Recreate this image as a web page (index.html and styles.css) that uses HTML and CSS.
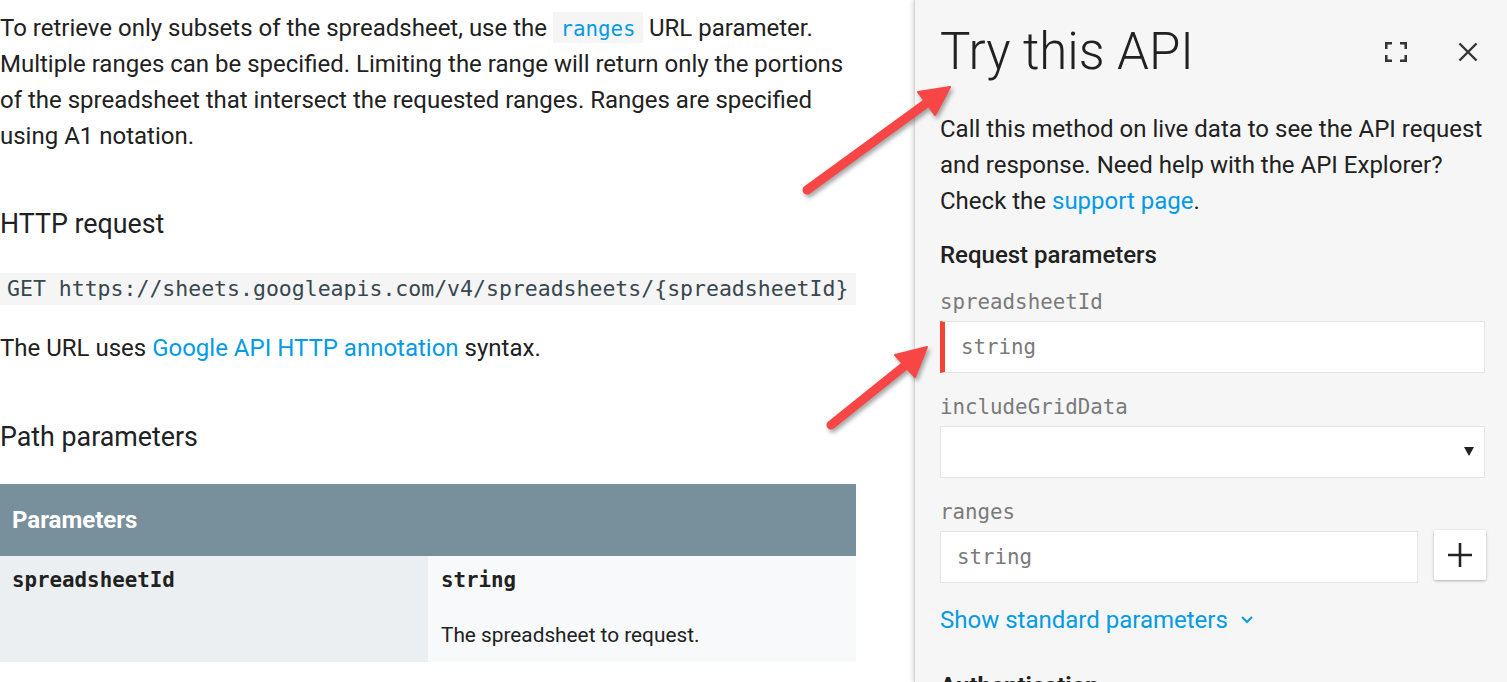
FILE: index.html
```html
<!DOCTYPE html>
<html lang="en">
<head>
<meta charset="utf-8">
<title>spreadsheets.get</title>
<link rel="stylesheet" href="styles.css">
</head>
<body>
<div class="page">
  <main class="doc">
    <p class="intro">To retrieve only subsets of the spreadsheet, use the <code class="inline">ranges</code> URL parameter. Multiple ranges can be specified. Limiting the range will return only the portions of the spreadsheet that intersect the requested ranges. Ranges are specified using A1 notation.</p>
    <h2 class="doc-h h-http">HTTP request</h2>
    <pre class="req">GET https://sheets.googleapis.com/v4/spreadsheets/{spreadsheetId}</pre>
    <p class="url-note">The URL uses <a class="link" href="#">Google API HTTP annotation</a> syntax.</p>
    <h2 class="doc-h h-path">Path parameters</h2>
    <table class="params">
      <thead>
        <tr><th colspan="2">Parameters</th></tr>
      </thead>
      <tbody>
        <tr>
          <td class="p-name">spreadsheetId</td>
          <td class="p-desc">
            <div class="p-type">string</div>
            <p class="p-text">The spreadsheet to request.</p>
          </td>
        </tr>
      </tbody>
    </table>
  </main>

  <aside class="panel">
    <div class="panel-head">
      <h1 class="panel-title">Try this API</h1>
      <div class="head-icons">
        <svg class="ic-full" width="22" height="20" viewBox="0 0 22 20"><path d="M0 0h7v2.5H2.5V7H0zM22 0h-7v2.5h4.5V7H22zM0 20h7v-2.5H2.5V13H0zM22 20h-7v-2.5h4.5V13H22z" fill="#333"/></svg>
        <svg class="ic-close" width="20" height="20" viewBox="0 0 20 20"><path d="M1.5 1.5L18.5 18.5M18.5 1.5L1.5 18.5" stroke="#333" stroke-width="2.4" fill="none"/></svg>
      </div>
    </div>
    <p class="panel-desc">Call this method on live data to see the API request and response. Need help with the API Explorer? Check the <a class="link" href="#">support page</a>.</p>
    <div class="rp-title">Request parameters</div>

    <div class="field field-first">
      <div class="field-label">spreadsheetId</div>
      <div class="input required"><span class="ph">string</span></div>
    </div>
    <div class="field">
      <div class="field-label">includeGridData</div>
      <div class="input select"><svg class="sel-arrow" width="10" height="9" viewBox="0 0 10 9"><path d="M0 0h10L5 9z" fill="#222"/></svg></div>
    </div>
    <div class="field">
      <div class="field-label">ranges</div>
      <div class="field-row">
        <div class="input grow"><span class="ph">string</span></div>
        <button class="add-btn" type="button"><svg width="24" height="24" viewBox="0 0 24 24"><path d="M12 0v24M0 12h24" stroke="#222" stroke-width="2.6" fill="none"/></svg></button>
      </div>
    </div>

    <div class="std-params"><span>Show standard parameters</span><svg class="chev" width="12" height="8" viewBox="0 0 12 8"><path d="M1 1l5 5 5-5" stroke="#039be5" stroke-width="2" fill="none"/></svg></div>
    <div class="auth">Authentication</div>
  </aside>
</div>

<svg class="arrows" width="1507" height="682" viewBox="0 0 1507 682">
  <g fill="#f84545" stroke="#f84545">
    <line x1="807" y1="190" x2="928" y2="102" stroke-width="9" stroke-linecap="round"/>
    <polygon points="950,87 918,92 935,115" stroke-width="2" stroke-linejoin="round"/>
    <line x1="831" y1="425" x2="907" y2="364" stroke-width="9" stroke-linecap="round"/>
    <polygon points="927,347 895,355 915,377" stroke-width="2" stroke-linejoin="round"/>
  </g>
</svg>
</body>
</html>
```

FILE: styles.css
```css
* { box-sizing: border-box; }

html, body {
  margin: 0;
  padding: 0;
}

body {
  position: relative;
  width: 1507px;
  height: 682px;
  overflow: hidden;
  background: #fff;
  color: #212121;
  font-family: Roboto, "Noto Sans", sans-serif;
}

.page {
  display: flex;
  height: 682px;
}

/* ---------- left documentation column ---------- */
.doc {
  flex: none;
  width: 914px;
}

.intro {
  margin: 10px 0 0;
  width: 856px;
  font-size: 24px;
  line-height: 36px;
}

.inline {
  font-family: "DejaVu Sans Mono", monospace;
  font-size: 20.8px;
  line-height: 1;
  color: #039be5;
  background: #f5f5f5;
  padding: 5px 7.5px 2px;
}

.doc-h {
  margin: 0;
  font-weight: 400;
  font-size: 26.8px;
  line-height: 36px;
  color: #202124;
}

.h-http { margin-top: 52px; }
.h-path { margin-top: 53px; }

.req {
  margin: 31px 0 0;
  width: 856px;
  height: 32px;
  padding: 0 7px;
  background: #f5f5f5;
  color: #37474f;
  font-family: "DejaVu Sans Mono", monospace;
  font-size: 21.5px;
  line-height: 32px;
  white-space: pre;
  overflow: hidden;
}

.url-note {
  margin: 25px 0 0;
  font-size: 24px;
  line-height: 36px;
}

.link {
  color: #039be5;
  text-decoration: none;
}

.params {
  margin-top: 29px;
  width: 856px;
  border-collapse: collapse;
  table-layout: fixed;
}

.params th {
  height: 72px;
  padding: 0 12px;
  background: #78909c;
  color: #fff;
  text-align: left;
  font-weight: 700;
  font-size: 24px;
  line-height: 36px;
}

.params td {
  vertical-align: top;
  width: 428px;
}

.p-name {
  background: #eceff1;
  padding: 10px 12px 11px;
  font-family: "DejaVu Sans Mono", monospace;
  font-weight: 700;
  font-size: 20.8px;
  line-height: 28px;
}

.p-desc {
  background: #f7f9fa;
  padding: 10px 13px 11px;
}

.p-type {
  font-family: "DejaVu Sans Mono", monospace;
  font-weight: 700;
  font-size: 20.8px;
  line-height: 28px;
}

.p-text {
  margin: 26px 0 0;
  font-size: 20.8px;
  line-height: 31px;
}

/* ---------- right "Try this API" panel ---------- */
.panel {
  flex: none;
  width: 593px;
  height: 682px;
  background: #f6f6f6;
  border-left: 1px solid #d4d4d4;
  box-shadow: -2px 0 4px rgba(0, 0, 0, 0.12);
  padding: 22px 22px 0 25px;
  overflow: hidden;
}

.panel-head {
  display: flex;
  align-items: center;
  height: 60px;
}

.panel-title {
  flex: 1;
  margin: 0;
  font-size: 51px;
  font-weight: 300;
  line-height: 60px;
  color: #212121;
}

.head-icons {
  display: flex;
  align-items: center;
  gap: 51px;
  margin-right: 7px;
}

.ic-full, .ic-close { display: block; }

.panel-desc {
  margin: 29px -10px 0 0;
  font-size: 24px;
  line-height: 36px;
  color: #212121;
}

.rp-title {
  margin-top: 18px;
  font-size: 24px;
  line-height: 36px;
  font-weight: 500;
}

.field {
  margin-top: 20.5px;
}

.field.field-first {
  margin-top: 15px;
}

.field-label {
  font-family: "DejaVu Sans Mono", monospace;
  font-size: 20.8px;
  line-height: 28px;
  color: #7a7a7a;
  margin-bottom: 4.5px;
}

.input {
  display: flex;
  align-items: center;
  height: 52px;
  background: #fff;
  border: 1px solid #e4e4e4;
  padding-left: 16px;
}

.input.required {
  border-left: 5px solid #f44336;
}

.ph {
  font-family: "DejaVu Sans Mono", monospace;
  font-size: 20.8px;
  color: #7a7a7a;
}

.select {
  justify-content: flex-end;
  padding-right: 10px;
}

.sel-arrow { display: block; }

.field-row {
  display: flex;
  align-items: flex-start;
  gap: 16px;
}

.grow { flex: 1; }

.add-btn {
  flex: none;
  width: 52px;
  height: 50px;
  margin-top: -1px;
  margin-right: -1px;
  border: none;
  border-radius: 2px;
  background: #fff;
  box-shadow: 0 1px 3px rgba(0, 0, 0, 0.3);
  display: flex;
  align-items: center;
  justify-content: center;
  padding: 0;
}

.add-btn svg { display: block; }

.std-params {
  margin-top: 19px;
  display: flex;
  align-items: center;
  gap: 13px;
  color: #039be5;
  font-size: 24px;
  line-height: 36px;
}

.chev { display: block; margin-top: 1px; }

.auth {
  margin-top: 30px;
  font-size: 24px;
  line-height: 36px;
  font-weight: 700;
}

/* ---------- annotation arrows (overlay) ---------- */
.arrows {
  position: absolute;
  left: 0;
  top: 0;
  pointer-events: none;
  filter: drop-shadow(2px 3px 2px rgba(0, 0, 0, 0.35));
}
```
